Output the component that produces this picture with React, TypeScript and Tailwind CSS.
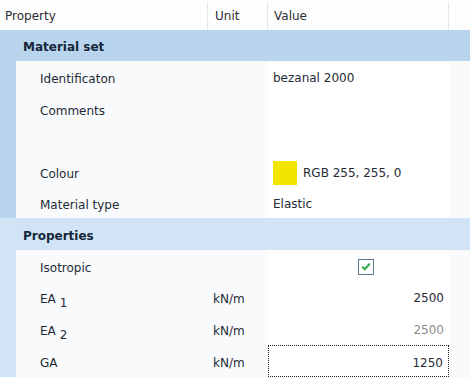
import React from "react";

type Row =
  | { kind: "group"; label: string; h: string; tone: "dark" | "light" }
  | {
      kind: "prop";
      label: React.ReactNode;
      unit?: string;
      value?: React.ReactNode;
      h: string;
      tone: "dark" | "light";
      align?: "left" | "right";
      focused?: boolean;
      muted?: boolean;
    };

const FONT = { fontFamily: '"DejaVu Sans", Verdana, sans-serif' };

function Sub({ base, idx }: { base: string; idx: string }) {
  return (
    <span>
      {base}
      <span className="relative top-[4px] ml-[4px]">{idx}</span>
    </span>
  );
}

function Check() {
  return (
    <div className="ml-[85px] flex h-[16px] w-[16px] items-center justify-center border border-[#5c7a8c] bg-white">
      <svg width="10" height="9" viewBox="0 0 10 9">
        <path d="M1.2 4.6 L3.8 7.2 L8.8 1.6" fill="none" stroke="#2fa84a" strokeWidth="2" />
      </svg>
    </div>
  );
}

const rows: Row[] = [
  { kind: "group", label: "Material set", h: "h-[31px]", tone: "dark" },
  { kind: "prop", label: "Identificaton", value: "bezanal 2000", h: "h-[32px]", tone: "dark" },
  { kind: "prop", label: "Comments", h: "h-[63px]", tone: "dark" },
  {
    kind: "prop",
    label: "Colour",
    value: (
      <div className="flex items-center gap-[6px]">
        <div className="h-[24px] w-[24px] bg-[#f2e500]" />
        <span>RGB 255, 255, 0</span>
      </div>
    ),
    h: "h-[31px]",
    tone: "dark",
  },
  { kind: "prop", label: "Material type", value: "Elastic", h: "h-[31px]", tone: "dark" },
  { kind: "group", label: "Properties", h: "h-[32px]", tone: "light" },
  { kind: "prop", label: "Isotropic", value: <Check />, h: "h-[31px]", tone: "light" },
  { kind: "prop", label: <Sub base="EA" idx="1" />, unit: "kN/m", value: "2500", align: "right", h: "h-[32px]", tone: "light" },
  { kind: "prop", label: <Sub base="EA" idx="2" />, unit: "kN/m", value: "2500", align: "right", muted: true, h: "h-[32px]", tone: "light" },
  { kind: "prop", label: "GA", unit: "kN/m", value: "1250", align: "right", focused: true, h: "h-[32px]", tone: "light" },
];

export default function App() {
  return (
    <div className="h-[378px] w-[470px] overflow-hidden bg-[#f8fafc] text-[12px] text-[#1f2a36]" style={FONT}>
      {/* header */}
      <div className="flex h-[30px] bg-[#fdfdfd] pt-[2px] text-[#2a2f36]">
        <div className="flex w-[208px] items-center border-r border-[#e6e6e6] pl-[5px]">Property</div>
        <div className="flex w-[60px] items-center border-r border-[#e6e6e6] pl-[7px]">Unit</div>
        <div className="flex w-[181px] items-center border-r border-[#e6e6e6] pl-[6px]">Value</div>
        <div className="flex-1" />
      </div>

      {rows.map((r, i) => {
        const strip = r.tone === "dark" ? "bg-[#b9d5ee]" : "bg-[#d0e4f6]";
        if (r.kind === "group") {
          return (
            <div key={i} className={`flex items-center ${r.h} ${strip} pl-[23px] pt-[3px] font-bold text-[#15263a]`}>
              {r.label}
            </div>
          );
        }
        return (
          <div key={i} className={`flex ${r.h}`}>
            <div className={`w-[16px] ${strip}`} />
            <div className="flex h-[32px] w-[192px] items-center pl-[24px] pt-[3px]">{r.label}</div>
            <div className="flex h-[32px] w-[60px] items-center pl-[5px] pt-[3px]">{r.unit}</div>
            <div
              className={`flex h-full w-[181px] items-start bg-white ${
                r.focused ? "border border-dotted border-[#222]" : ""
              }`}
            >
              <div
                className={`flex h-[31px] w-full items-center pt-[2px] ${
                  r.align === "right" ? "justify-end pr-[5px]" : "pl-[5px]"
                } ${r.muted ? "text-[#8c8c8c]" : ""}`}
              >
                {r.value}
              </div>
            </div>
            <div className="flex-1" />
          </div>
        );
      })}
    </div>
  );
}
